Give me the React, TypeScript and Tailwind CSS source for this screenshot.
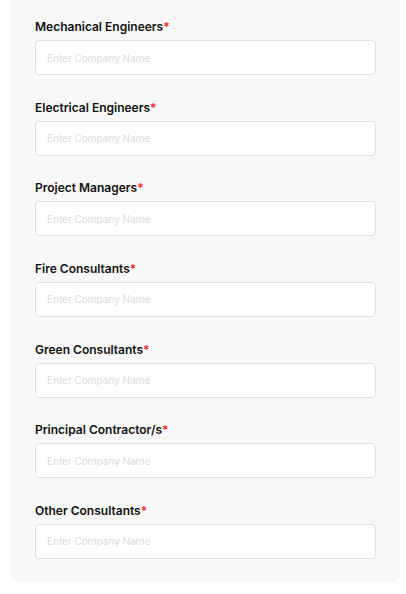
import React from "react";

const fields = [
  "Mechanical Engineers",
  "Electrical Engineers",
  "Project Managers",
  "Fire Consultants",
  "Green Consultants",
  "Principal Contractor/s",
  "Other Consultants",
];

export default function App() {
  return (
    <div className="min-h-[594px] bg-white pl-[11px] pr-[6px] font-['Inter',sans-serif]">
      <div className="-mt-2 rounded-lg bg-[#f8f8f8] px-6 pt-[27px] pb-[23px]">
        <div className="flex flex-col gap-[24.67px]">
          {fields.map((label) => (
            <div key={label} className="flex flex-col gap-[5px]">
              <label className="text-[12px] font-semibold leading-[16px] text-[#111111]">
                {label}
                <span className="text-[#ef2b2b]">*</span>
              </label>
              <input
                type="text"
                placeholder="Enter Company Name"
                className="h-[35px] w-full rounded-[4px] border border-[#e0e0e0] bg-white px-[11px] text-[10px] text-[#111] outline-none placeholder:text-[#dcdcdc]"
              />
            </div>
          ))}
        </div>
      </div>
    </div>
  );
}
